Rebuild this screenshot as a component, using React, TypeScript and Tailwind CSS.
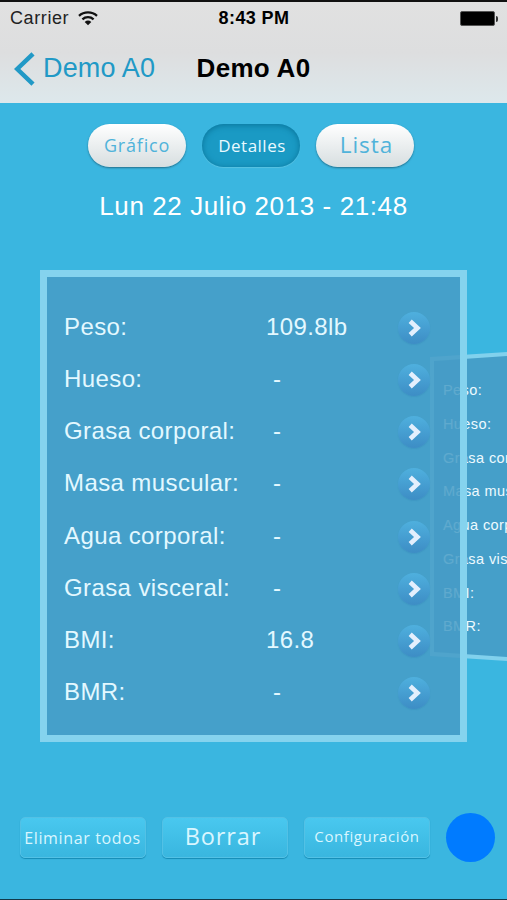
const rows = [
  { label: 'Peso:', value: '109.8lb' },
  { label: 'Hueso:', value: '-' },
  { label: 'Grasa corporal:', value: '-' },
  { label: 'Masa muscular:', value: '-' },
  { label: 'Agua corporal:', value: '-' },
  { label: 'Grasa visceral:', value: '-' },
  { label: 'BMI:', value: '16.8' },
  { label: 'BMR:', value: '-' },
];

function Wifi() {
  return (
    <svg className="ml-[9px] h-[15px] w-[20px]" viewBox="0 0 20 15" fill="none" stroke="#111" strokeWidth="2.3">
      <path d="M1 4.8C6 .2 14 .2 19 4.8" />
      <path d="M4.4 8.3C7.6 5.4 12.4 5.4 15.6 8.3" />
      <path d="M10 14.2 6.7 10.9Q10 8.2 13.3 10.9Z" fill="#111" stroke="none" />
    </svg>
  );
}

function Header() {
  return (
    <header className="h-[103px] border-t-2 border-[#111] bg-linear-to-b from-[#e1e1e1] via-[#dddedf] to-[#dde8ec] text-black">
      <div className="grid h-[33px] grid-cols-[1fr_auto_1fr] items-center pl-[10px] pr-[9px]">
        <div className="flex items-center">
          <span className="text-[18px] tracking-[0.6px] text-[#222]">Carrier</span>
          <Wifi />
        </div>
        <span className="text-[18px] font-bold tracking-[0.4px]">8:43 PM</span>
        <div className="flex items-center justify-end">
          <div className="h-[15px] w-[35px] rounded-[2px] border border-[#555] bg-black" />
          <div className="ml-px h-[6px] w-[2px] rounded-r-full bg-[#333]" />
        </div>
      </div>
      <div className="grid h-[67px] grid-cols-[1fr_auto_1fr] items-center px-[14px]">
        <div className="flex items-center text-[#2199c6]">
          <svg className="h-[34px] w-[21px]" viewBox="0 0 21 34" fill="none" stroke="currentColor" strokeWidth="4.5">
            <path d="M19 1.8 3.2 17 19 32.2" />
          </svg>
          <span className="ml-[8px] whitespace-nowrap text-[27px] tracking-[0.15px]">Demo A0</span>
        </div>
        <h1 className="whitespace-nowrap text-[26px] font-bold tracking-[0.3px]">Demo A0</h1>
      </div>
    </header>
  );
}

function Arrow() {
  return (
    <button className="mt-[2px] flex h-[32px] w-[32px] items-center justify-center rounded-full bg-linear-to-b from-[#4fb0de] to-[#3d8dc5] shadow-[0_1px_1px_#2d7eb344]">
      <svg className="ml-[2px] h-[18px] w-[14px]" viewBox="0 0 14 18" fill="none" stroke="#e3effd" strokeWidth="4.6">
        <path d="m2.2 2.2 7.3 6.8-7.3 6.8" />
      </svg>
    </button>
  );
}

function NextCard() {
  return (
    <div className="absolute left-[430px] top-[352px] h-[310px] w-[77px] overflow-hidden bg-[#81d1ed] [clip-path:polygon(0_5px,100%_0,100%_309px,0_304px)]">
      <div className="h-full bg-[#459fc9] pl-[13px] pt-[22px] [clip-path:polygon(4px_9px,100%_4px,100%_305px,4px_300px)]">
        {rows.map((row) => (
          <div key={row.label} className="flex h-[33.75px] items-center whitespace-nowrap text-[14.5px] tracking-[0.4px] text-[#edfaff]">
            {row.label}
          </div>
        ))}
      </div>
    </div>
  );
}

export default function App() {
  return (
    <div className="relative flex h-[900px] w-[507px] flex-col overflow-hidden border-b border-[#123a4b] bg-[#3ab6e0] font-['Liberation_Sans',Arial,sans-serif]">
      <Header />
      <nav className="flex items-center gap-[16px] pl-[88px] pt-[21px] font-['Open_Sans','Noto_Sans',sans-serif] font-medium">
        <button className="h-[43px] w-[98px] rounded-full bg-linear-to-b from-white to-[#d7dee0] text-[18px] tracking-[0.8px] text-[#50b3da] shadow-[0_1px_2px_#246f8b]">
          Gráfico
        </button>
        <button className="h-[43px] w-[98px] rounded-full bg-[#1a9ac4] pl-[2px] text-[17px] tracking-[0.5px] text-[#e9f9ff] shadow-[inset_0_1px_6px_#087298,0_1px_1px_#58c2e2]">
          Detalles
        </button>
        <button className="h-[43px] w-[98px] rounded-full bg-linear-to-b from-white to-[#d7dee0] pb-[2px] pl-[3px] text-[22.5px] tracking-[1px] text-[#50b3da] shadow-[0_1px_2px_#246f8b]">
          Lista
        </button>
      </nav>
      <p className="mt-[23px] text-center text-[26px] leading-[32px] tracking-[0.6px] text-white">Lun 22 Julio 2013 - 21:48</p>
      <NextCard />
      <main className="relative ml-[40px] mt-[48px] h-[472px] w-[427px] border-[7px] border-[#85d3ee] bg-[#479cc6]/86 bg-clip-padding pl-[17px] pt-[24px]">
        {rows.map((row) => (
          <div
            key={row.label}
            className="grid h-[52.15px] grid-cols-[202px_132px_32px] items-center whitespace-nowrap text-[24px] tracking-[0.4px] text-[#e3f8ff]"
          >
            <span>{row.label}</span>
            <span className={row.value === '-' ? 'pl-[7px]' : ''}>{row.value}</span>
            <Arrow />
          </div>
        ))}
      </main>
      <footer className="mt-[71px] flex items-center gap-[16px] pl-[20px] font-['Open_Sans','Noto_Sans',sans-serif] font-medium text-[#d9f6ff]">
        <button className="h-[41px] w-[126px] whitespace-nowrap rounded-[5px] border border-[#53c1e5] bg-linear-to-b from-[#49c8ef] to-[#39b6df] pr-px text-[16px] tracking-[0.65px] shadow-[0_1px_1px_#168bb4]">
          Eliminar todos
        </button>
        <button className="h-[41px] w-[126px] whitespace-nowrap rounded-[5px] border border-[#53c1e5] bg-linear-to-b from-[#49c8ef] to-[#39b6df] pr-[4px] pb-[2px] text-[23.5px] tracking-[0.9px] shadow-[0_1px_1px_#168bb4]">
          Borrar
        </button>
        <button className="h-[41px] w-[126px] whitespace-nowrap rounded-[5px] border border-[#53c1e5] bg-linear-to-b from-[#49c8ef] to-[#39b6df] pb-[2px] text-[15px] tracking-[0.6px] shadow-[0_1px_1px_#168bb4]">
          Configuración
        </button>
        <button aria-label="Color" className="h-[49px] w-[49px] rounded-full bg-[#007bff]" />
      </footer>
    </div>
  );
}
